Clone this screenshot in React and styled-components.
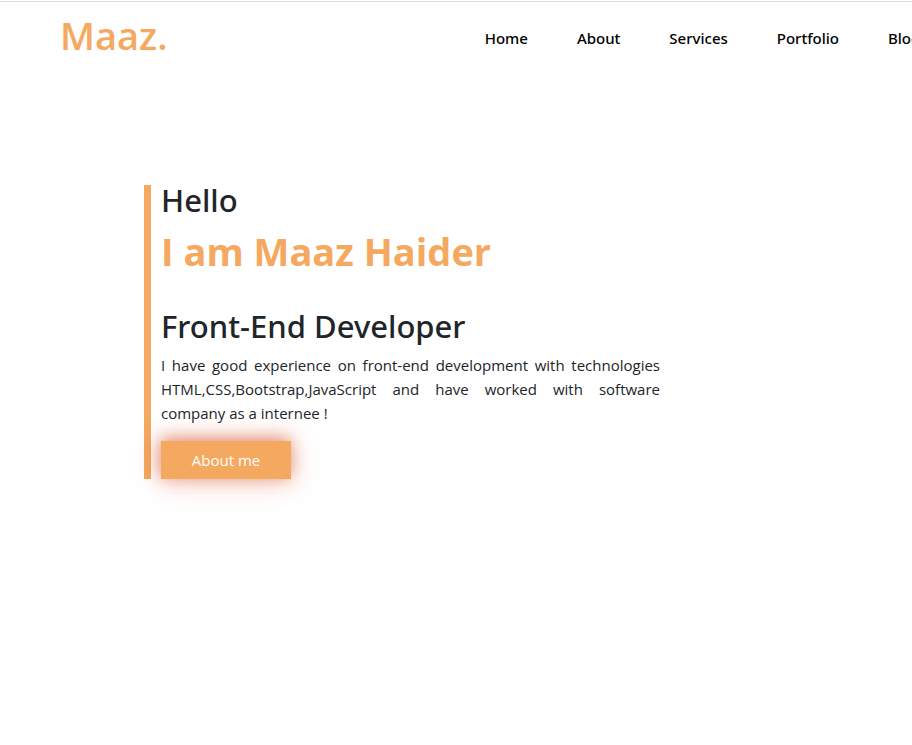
import React from "react";
import styled, { createGlobalStyle } from "styled-components";

const GlobalStyle = createGlobalStyle`
  *, *::before, *::after { box-sizing: border-box; }
  body {
    margin: 0;
    background: #fff;
    color: #212529;
    font-family: "Segoe UI", "Open Sans", "Noto Sans", sans-serif;
    font-size: 15px;
    line-height: 24px;
  }
`;

const Page = styled.div`
  min-height: 100vh;
  padding-top: 1px;
  overflow: hidden;
`;

const Header = styled.header`
  display: flex;
  align-items: center;
  padding: 4px 0 0 60px;
  border-top: 1px solid #d9dcdc;
`;

const Logo = styled.a`
  flex: 0 0 106px;
  color: #f4a860;
  font-size: 38px;
  line-height: 58px;
  font-weight: 600;
  text-decoration: none;
`;

const Nav = styled.nav`
  display: flex;
  flex-shrink: 0;
  gap: 49px;
  margin: 6px 0 0 317px;
`;

const NavLink = styled.a`
  flex-shrink: 0;
  color: #000;
  font-family: "Segoe UI", "Noto Sans", sans-serif;
  font-weight: 500;
  text-decoration: none;
`;

const Hero = styled.main`
  max-width: 516px;
  margin: 121px 0 0 144px;
  padding-left: 10px;
  border-left: 7px solid #f4a860;
`;

const Heading = styled.h2`
  margin: 0 0 12px;
  font-family: "Segoe UI", "Noto Sans", sans-serif;
  font-size: 31px;
  line-height: 30px;
  font-weight: 500;
`;

const Name = styled.h1`
  margin: 0 0 36px;
  color: #f4a860;
  font-size: 38px;
  line-height: 48px;
  font-weight: 700;
`;

const Intro = styled.p`
  margin: 0 0 16px;
  text-align: justify;
`;

const AboutButton = styled.button`
  display: block;
  min-width: 130px;
  height: 38px;
  padding: 0 30px;
  border: 0;
  background: #f4a860;
  color: #fff;
  font: inherit;
  box-shadow:
    -1px -3px 16px rgba(214, 84, 50, 0.55),
    0 2px 28px rgba(228, 104, 64, 0.4);
`;

const links = ["Home", "About", "Services", "Portfolio", "Blog"];

export default function App() {
  return (
    <Page>
      <GlobalStyle />
      <Header>
        <Logo href="#home">Maaz.</Logo>
        <Nav>
          {links.map((label) => (
            <NavLink key={label} href={`#${label.toLowerCase()}`}>{label}</NavLink>
          ))}
        </Nav>
      </Header>
      <Hero>
        <Heading>Hello</Heading>
        <Name>I am Maaz Haider</Name>
        <Heading>Front-End Developer</Heading>
        <Intro>
          I have good experience on front-end development with technologies
          HTML,CSS,Bootstrap,JavaScript and have worked with software company as
          a internee !
        </Intro>
        <AboutButton type="button">About me</AboutButton>
      </Hero>
    </Page>
  );
}
